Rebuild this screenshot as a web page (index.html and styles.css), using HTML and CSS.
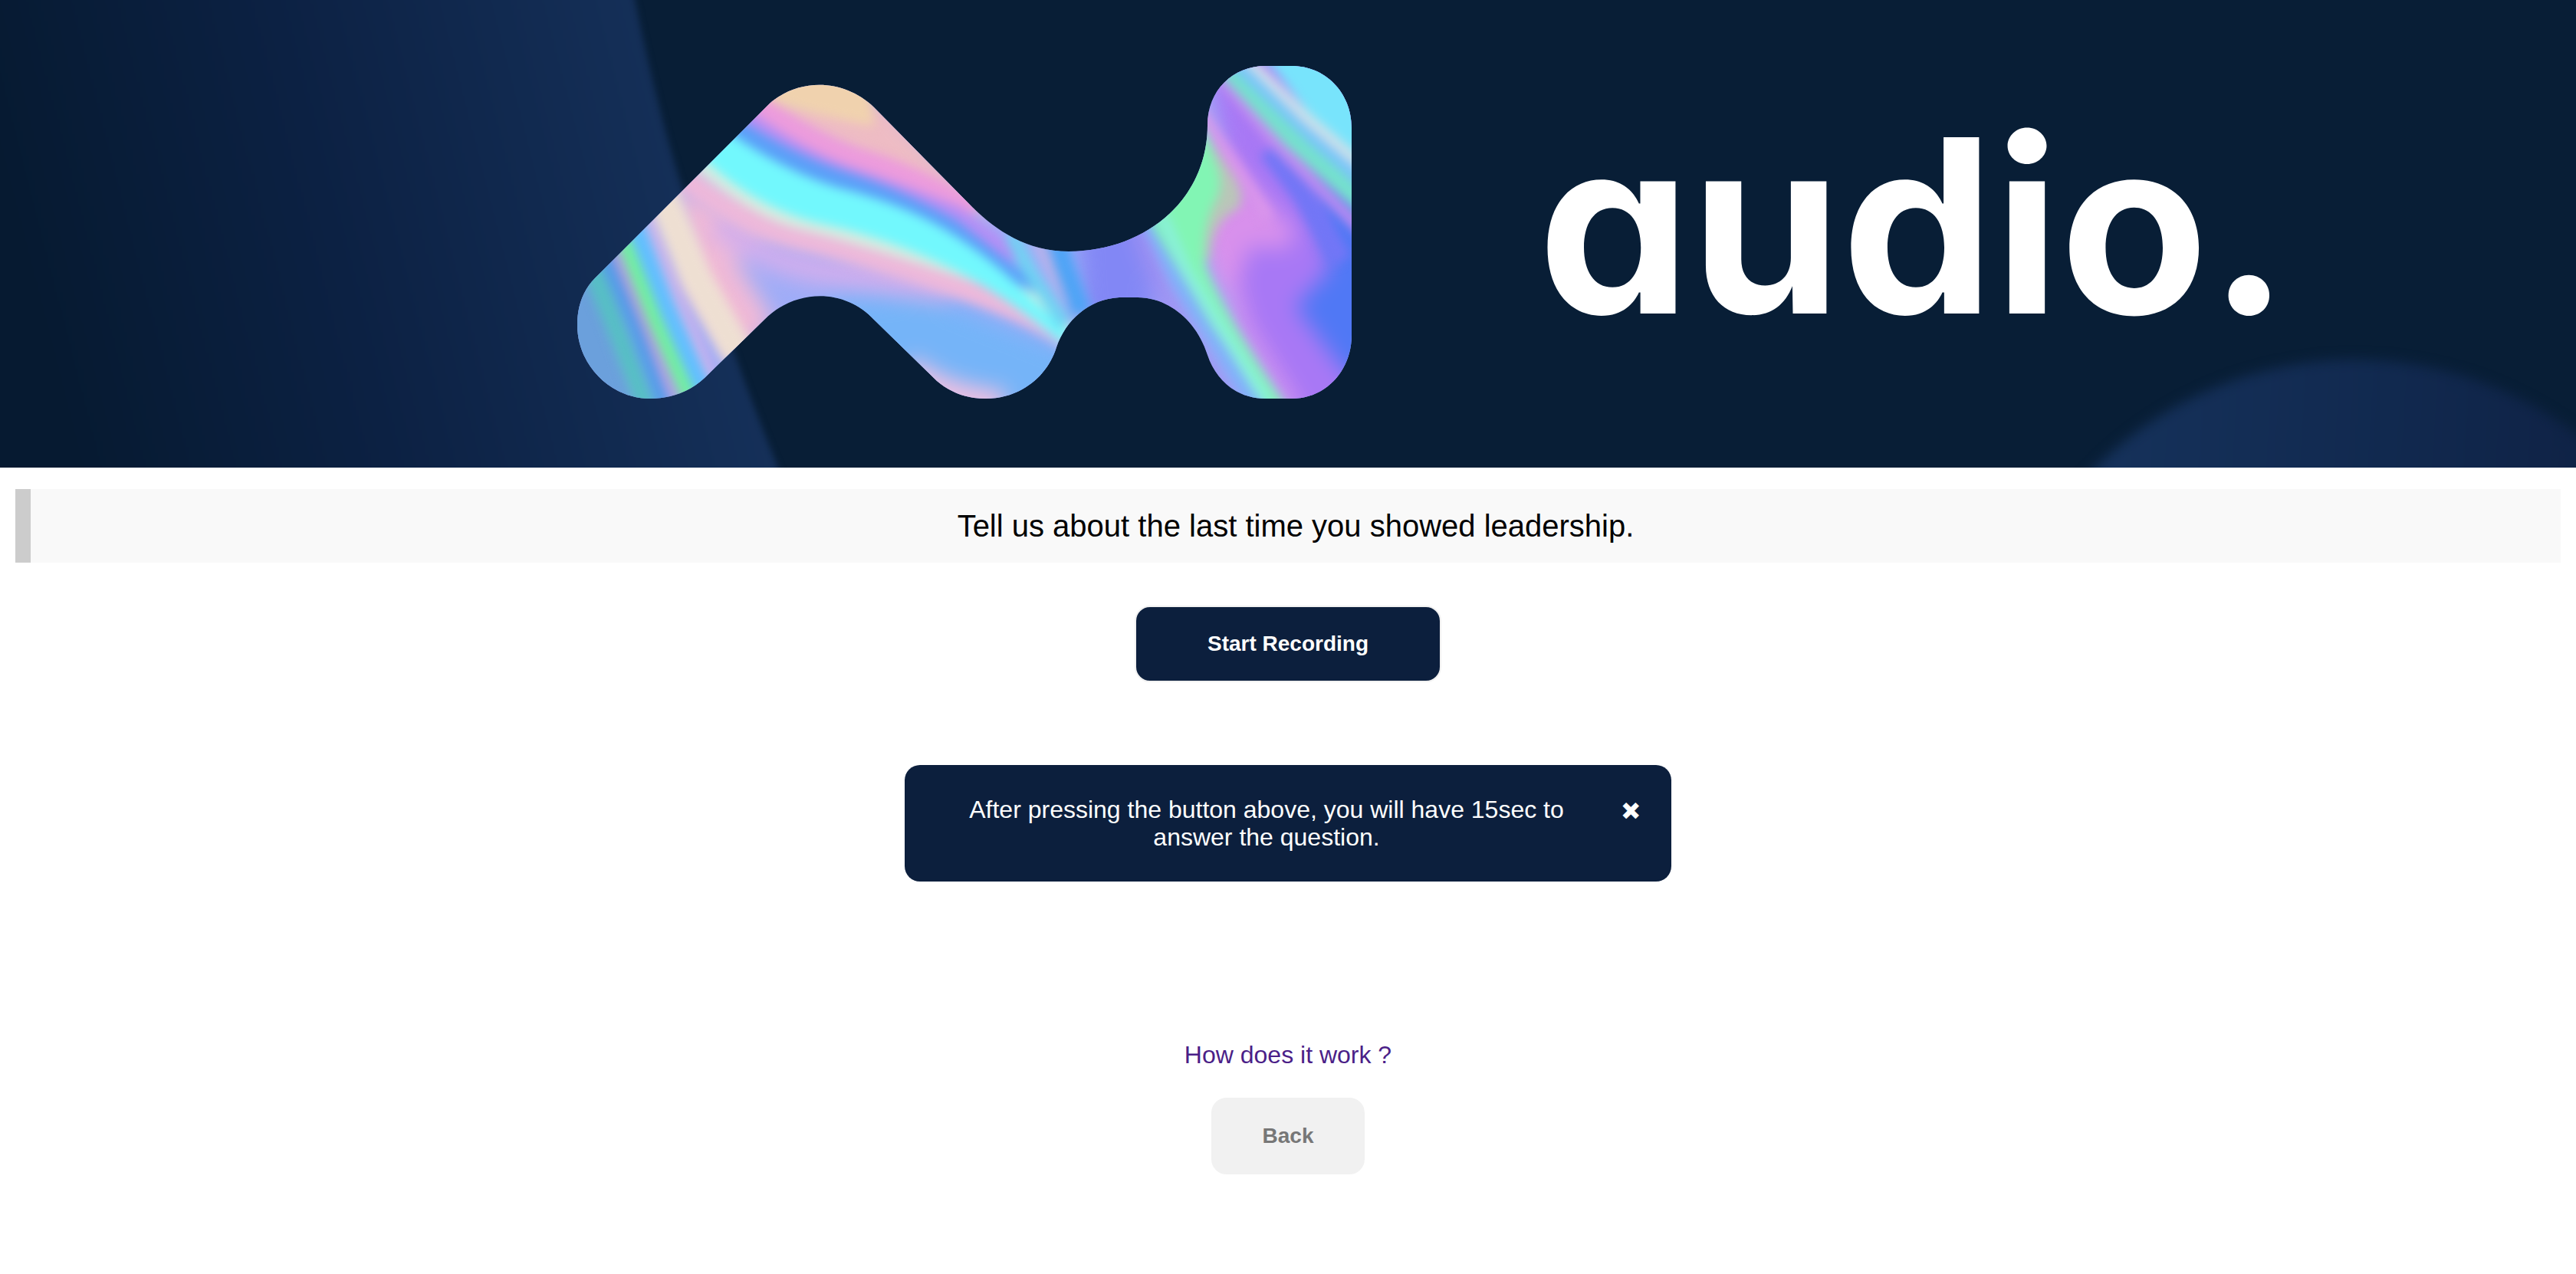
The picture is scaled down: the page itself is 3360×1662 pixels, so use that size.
FILE: index.html
```html
<!DOCTYPE html>
<html lang="en">
<head>
<meta charset="utf-8">
<meta name="viewport" content="width=device-width, initial-scale=1">
<title>audio.</title>
<link rel="stylesheet" href="styles.css">
</head>
<body>
<header>
<svg class="banner" viewBox="0 0 3360 610" role="img" aria-label="audio.">
  <defs>
    <linearGradient id="panel" gradientUnits="userSpaceOnUse" x1="60" y1="460" x2="920" y2="240">
      <stop offset="0" stop-color="#061a31"/>
      <stop offset="0.45" stop-color="#0c2143"/>
      <stop offset="1" stop-color="#153059"/>
    </linearGradient>
    <linearGradient id="disc" gradientUnits="userSpaceOnUse" x1="2760" y1="560" x2="3400" y2="600">
      <stop offset="0" stop-color="#15315a"/>
      <stop offset="0.55" stop-color="#11294f"/>
      <stop offset="1" stop-color="#0f2245"/>
    </linearGradient>
    <filter id="soft" color-interpolation-filters="sRGB" x="-10%" y="-10%" width="120%" height="120%"><feGaussianBlur stdDeviation="4"/></filter>
    <filter id="haze" color-interpolation-filters="sRGB" x="-10%" y="-10%" width="120%" height="120%"><feGaussianBlur stdDeviation="8"/></filter>
    <filter id="foil" color-interpolation-filters="sRGB" filterUnits="userSpaceOnUse" x="700" y="40" width="1120" height="540"><feGaussianBlur stdDeviation="7"/></filter>
    <filter id="wash" color-interpolation-filters="sRGB" filterUnits="userSpaceOnUse" x="650" y="0" width="1220" height="620"><feGaussianBlur stdDeviation="14"/></filter>
    <clipPath id="mark">
      <path d="M776 363L1004 135C1042 102 1100 102 1140 140L1265 267C1295 297 1336 328 1394 328C1492 328 1575 262 1575 163C1575 118 1608 86 1651 86H1685C1728 86 1763 120 1763 167V437C1763 484 1729 520 1685 520H1651C1613 520 1586 496 1575 463C1560 416 1522 388 1484 388H1460C1420 390 1390 418 1378 453C1366 492 1330 520 1286 520C1260 520 1240 512 1222 497L1140 417C1102 376 1038 376 997 417L919 493C900 511 875 520 848 520C796 520 753 476 753 424C753 400 760 379 776 363Z"/>
    </clipPath>
  </defs>
  <rect width="3360" height="610" fill="#081e36"/>
  <path filter="url(#soft)" fill="url(#panel)" d="M-40 -40H820L828 0Q865 180 905 290Q945 440 1015 610L1030 650H-40Z"/>
  <circle filter="url(#haze)" cx="3072" cy="947" r="478" fill="url(#disc)"/>
  <g clip-path="url(#mark)" fill="none">
    <rect x="740" y="70" width="1040" height="460" fill="#9fadf8"/>
    <g filter="url(#wash)">
      <path fill="#6ba0dc" d="M700 300L790 340L850 560H700Z"/>
      <path fill="#f0b9d6" d="M880 240L1000 300L960 340L1010 420L960 470L900 380Z"/>
      <path fill="#eebcc4" d="M1000 120L1160 130L1300 290L1160 240L980 150Z"/>
      <path stroke="#d3aeec" stroke-width="34" d="M935 290Q1000 345 1090 355T1240 390"/>
      <path fill="#75b4f8" d="M1070 392Q1180 380 1250 400L1400 460V560H1200Z"/>
      <path stroke="#f3c0e0" stroke-width="40" d="M1180 482Q1230 524 1310 530"/>
      <path stroke="#8287f5" stroke-width="90" d="M1450 280L1460 420"/>
      <path stroke="#a090f2" stroke-width="30" d="M1490 290L1540 430L1610 540"/>
      <path fill="#a878f5" d="M1570 60L1830 60V560H1690L1600 380L1610 280Z"/>
      <path fill="#5078f5" d="M1700 215L1830 290V560L1750 480L1690 400L1735 350Z"/>
      <path fill="#d890ec" d="M1590 190L1625 235L1690 300L1680 325L1630 322L1615 370L1590 380L1560 300Z"/>
      <path stroke="#d890ec" stroke-width="20" d="M1600 350L1620 425L1690 540"/>
    </g>
    <g filter="url(#foil)">
      <path fill="#78e4fc" d="M1630 50H1830V270L1760 215Z"/>
      <path stroke="#56bfc4" stroke-width="24" d="M770 345L811 447L846 540"/>
      <path stroke="#4f9ae8" stroke-width="16" d="M787 330L829 430L868 535"/>
      <path stroke="#bd98d8" stroke-width="9" d="M800 325L838 417L884 530"/>
      <path stroke="#60bfff" stroke-width="26" d="M825 280L872 400L925 520"/>
      <path stroke="#70f29a" stroke-width="18" d="M812 310L854 417L902 525"/>
      <path stroke="#dcb2e8" stroke-width="10" d="M842 280L884 390L932 500"/>
      <path stroke="#eedfd2" stroke-width="42" d="M862 250L908 363L965 465"/>
      <path fill="#f0d2ae" d="M1000 60H1130L1140 165Q1060 150 995 130Z"/>
      <path stroke="#ec9bdc" stroke-width="30" d="M975 128Q1060 190 1126 210T1270 275"/>
      <path stroke="#b58ef5" stroke-width="20" d="M955 140Q1040 204 1110 228T1250 280L1325 335"/>
      <path stroke="#edb8da" stroke-width="30" d="M890 230Q970 295 1045 312T1240 370T1400 447"/>
      <path stroke="#5a9ff8" stroke-width="32" d="M940 160Q1030 218 1100 240T1240 302L1350 388"/>
      <path stroke="#d8ecdf" stroke-width="18" d="M910 212Q990 278 1047 291T1251 352T1390 440"/>
      <path fill="#72f8fd" d="M900 165L950 172Q1020 222 1090 244Q1180 266 1240 304Q1300 342 1350 394L1400 440L1385 448Q1310 384 1240 350Q1160 312 1080 294Q990 276 915 205Z"/>
      <path stroke="#6fd3f2" stroke-width="18" d="M1318 305L1347 360L1390 425"/>
      <path stroke="#c3b4e4" stroke-width="10" d="M1352 312L1379 367L1408 420"/>
      <path stroke="#4ea4f6" stroke-width="26" d="M1378 310L1388 345L1412 410"/>
      <path stroke="#7fb0fa" stroke-width="20" d="M1490 270L1536 365L1578 430L1645 540"/>
      <path stroke="#dc97ea" stroke-width="14" d="M1566 145L1619 227L1655 285"/>
      <path stroke="#7276f6" stroke-width="28" d="M1655 195L1700 255L1750 340"/>
      <path fill="#b9c6b8" d="M1576 180L1606 225Q1630 262 1610 275Q1580 290 1578 340L1555 330Z"/>
      <path fill="#82f5b4" d="M1570 165L1583 205Q1600 240 1584 265Q1568 300 1572 345Q1590 400 1680 535H1655L1580 425L1500 290Z"/>
      <path stroke="#8af0dc" stroke-width="14" d="M1515 280L1547 353L1590 425L1652 525"/>
      <path stroke="#c48cf0" stroke-width="14" d="M1585 92L1669 193L1790 314"/>
      <path stroke="#74e2cc" stroke-width="24" d="M1590 78L1686 182L1790 277"/>
      <path stroke="#78c4fa" stroke-width="18" d="M1605 75L1715 182L1790 247"/>
      <path stroke="#d3e0e8" stroke-width="14" d="M1620 70L1704 154L1790 228"/>
    </g>
  </g>
  <text class="wordmark" x="2006" y="409">audio.</text>
</svg>
</header>
<main class="page">
  <blockquote class="question">Tell us about the last time you showed leadership.</blockquote>
  <button class="button record" type="button">Start Recording</button>
  <div class="notice" role="status">
    <p class="notice-text">After pressing the button above, you will have 15sec to answer the question.</p>
    <button class="close" type="button" aria-label="Close">×</button>
  </div>
  <a class="help" href="#help">How does it work ?</a>
  <button class="button back" type="button">Back</button>
</main>
</body>
</html>
```
FILE: styles.css
```css
* {
  box-sizing: border-box;
}

body {
  margin: 0;
  background: #fff;
  color: #000;
  font-family: "Liberation Sans", Arial, sans-serif;
  font-size: 32px;
  line-height: 36px;
}

.banner {
  display: block;
  width: 100%;
  height: auto;
}

.wordmark {
  fill: #fff;
  font-family: Inter, sans-serif;
  font-size: 316px;
  font-weight: 700;
  font-feature-settings: "cv11";
}

.page {
  display: flex;
  flex-direction: column;
  align-items: center;
  padding: 28px 20px 100px;
}

.question {
  align-self: stretch;
  margin: 0 0 56px;
  padding: 25px 20px;
  border-left: 20px solid #ccc;
  background: #f9f9f9;
  font-size: 40px;
  line-height: 46px;
  text-align: center;
}

.button {
  height: 100px;
  border: 2px solid #f1f1f1;
  border-radius: 20px;
  font-family: inherit;
  font-size: 28px;
  font-weight: bold;
  cursor: pointer;
}

.record {
  width: 400px;
  margin-bottom: 108px;
  background: #0c1f3d;
  color: #fff;
}

.notice {
  display: flex;
  align-items: flex-start;
  gap: 30px;
  width: 100%;
  max-width: 1000px;
  margin-bottom: 208px;
  padding: 40px;
  border-radius: 20px;
  background: #0c1f3d;
  color: #fff;
}

.notice-text {
  flex: 1;
  margin: 0;
  text-align: center;
}

.close {
  width: 26px;
  padding: 0;
  border: 0;
  background: none;
  color: inherit;
  font-family: Inter, sans-serif;
  font-size: 38px;
  font-weight: 900;
  line-height: 34px;
  cursor: pointer;
}

.help {
  margin-bottom: 38px;
  color: #4b1f88;
  text-decoration: none;
}

.back {
  width: 200px;
  background: #f1f1f1;
  color: #777;
}
```
